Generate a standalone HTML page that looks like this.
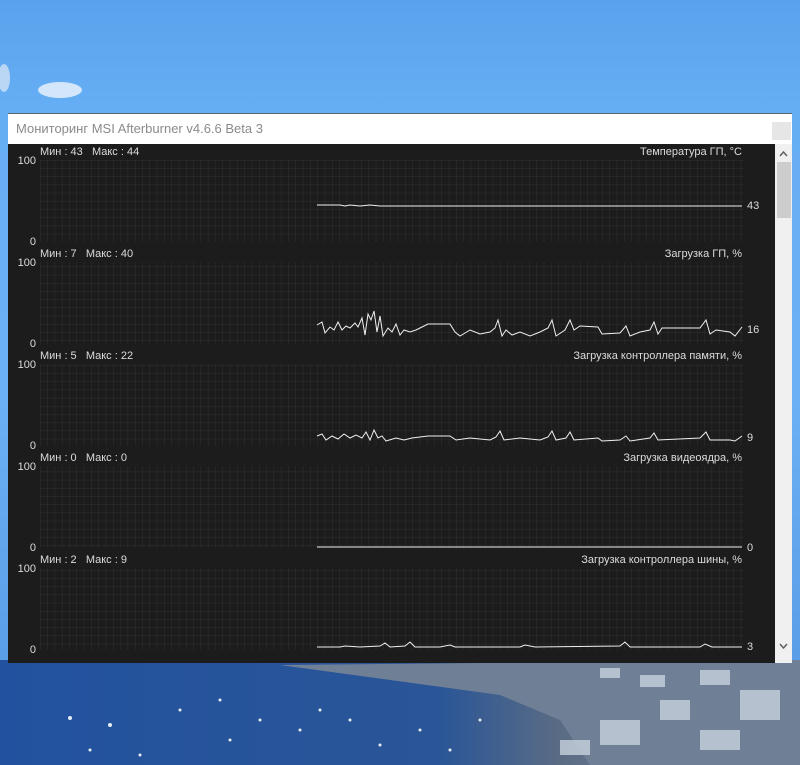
<!DOCTYPE html>
<html><head><meta charset="utf-8"><style>
html,body{margin:0;padding:0;width:800px;height:765px;overflow:hidden}
body{background:linear-gradient(#5aa2ec,#66aef4 110px,#6bb0f4 400px,#5a9ee8 660px);position:relative;font-family:"Liberation Sans",sans-serif}
</style></head><body>
<svg width="800" height="765" style="position:absolute;left:0;top:0" font-family="Liberation Sans, sans-serif">
<defs>
<pattern id="g" x="40" y="160" width="7.3" height="8.2" patternUnits="userSpaceOnUse">
<path d="M0 0H7.3M0 0V8.2" stroke="#303030" stroke-width="1" fill="none"/>
</pattern>
<linearGradient id="city" x1="0" x2="1" y1="0" y2="0">
<stop offset="0" stop-color="#22529f"/><stop offset="0.55" stop-color="#2a5597"/><stop offset="0.7" stop-color="#5a6c84"/><stop offset="1" stop-color="#8a96a8"/>
</linearGradient>
</defs>
<ellipse cx="60" cy="90" rx="22" ry="8" fill="#e8f0fa" opacity="0.85"/>
<ellipse cx="4" cy="78" rx="6" ry="14" fill="#e0eaf6" opacity="0.7"/>
<rect x="0" y="660" width="800" height="105" fill="url(#city)"/>
<path d="M280 665 L500 695 L560 720 L590 765 L800 765 L800 660 Z" fill="#6f7f95"/>
<g fill="#c8d2de" opacity="0.8">
<rect x="600" y="668" width="20" height="10"/><rect x="640" y="675" width="25" height="12"/><rect x="700" y="670" width="30" height="15"/><rect x="740" y="690" width="40" height="30"/><rect x="660" y="700" width="30" height="20"/><rect x="600" y="720" width="40" height="25"/><rect x="700" y="730" width="40" height="20"/><rect x="560" y="740" width="30" height="15"/>
</g>
<g fill="#e6ecf4">
<circle cx="180" cy="710" r="1.5"/><circle cx="230" cy="740" r="1.5"/><circle cx="260" cy="720" r="1.5"/><circle cx="300" cy="730" r="1.5"/><circle cx="350" cy="720" r="1.5"/><circle cx="380" cy="745" r="1.5"/><circle cx="220" cy="700" r="1.5"/><circle cx="320" cy="710" r="1.5"/><circle cx="90" cy="750" r="1.5"/><circle cx="140" cy="755" r="1.5"/><circle cx="70" cy="718" r="2"/><circle cx="110" cy="725" r="2"/><circle cx="420" cy="730" r="1.5"/><circle cx="450" cy="750" r="1.5"/><circle cx="480" cy="720" r="1.5"/>
</g>
<rect x="8" y="113" width="784" height="550" fill="#1c1c1c"/>
<rect x="8" y="113" width="784" height="31" fill="#ffffff"/>
<rect x="8" y="113" width="784" height="1" fill="#5a6470"/>
<rect x="772" y="122" width="19" height="18" fill="#e6e6e6"/>
<text x="16" y="133" font-size="13" fill="#8a8a8a">Мониторинг MSI Afterburner v4.6.6 Beta 3</text>
<rect x="775" y="144" width="17" height="519" fill="#f0f0f0"/>
<rect x="777" y="162" width="14" height="56" fill="#cdcdcd"/>
<path d="M780 156 L783.5 152 L787 156" stroke="#606060" stroke-width="1.5" fill="none"/>
<path d="M780 644 L783.5 648 L787 644" stroke="#606060" stroke-width="1.5" fill="none"/>
<rect x="40" y="160" width="703" height="82" fill="url(#g)"/>
<rect x="40" y="262" width="703" height="82" fill="url(#g)"/>
<rect x="40" y="364" width="703" height="82" fill="url(#g)"/>
<rect x="40" y="466" width="703" height="82" fill="url(#g)"/>
<rect x="40" y="568" width="703" height="82" fill="url(#g)"/>
<g font-size="11" fill="#dcdcdc">
<text x="40" y="155">Мин : 43&#160;&#160;&#160;Макс : 44</text>
<text x="742" y="155" text-anchor="end">Температура ГП, °С</text>
<text x="36" y="164" text-anchor="end">100</text><text x="36" y="245" text-anchor="end">0</text>
<text x="747" y="209">43</text>
<text x="40" y="257">Мин : 7&#160;&#160;&#160;Макс : 40</text>
<text x="742" y="257" text-anchor="end">Загрузка ГП, %</text>
<text x="36" y="266" text-anchor="end">100</text><text x="36" y="347" text-anchor="end">0</text>
<text x="747" y="333">16</text>
<text x="40" y="359">Мин : 5&#160;&#160;&#160;Макс : 22</text>
<text x="742" y="359" text-anchor="end">Загрузка контроллера памяти, %</text>
<text x="36" y="368" text-anchor="end">100</text><text x="36" y="449" text-anchor="end">0</text>
<text x="747" y="441">9</text>
<text x="40" y="461">Мин : 0&#160;&#160;&#160;Макс : 0</text>
<text x="742" y="461" text-anchor="end">Загрузка видеоядра, %</text>
<text x="36" y="470" text-anchor="end">100</text><text x="36" y="551" text-anchor="end">0</text>
<text x="747" y="551">0</text>
<text x="40" y="563">Мин : 2&#160;&#160;&#160;Макс : 9</text>
<text x="742" y="563" text-anchor="end">Загрузка контроллера шины, %</text>
<text x="36" y="572" text-anchor="end">100</text><text x="36" y="653" text-anchor="end">0</text>
<text x="747" y="650">3</text>
</g>
<g stroke="#f0f0f0" stroke-width="1" fill="none">
<path d="M317 205 L340 205 L345 206 L350 205 L360 206 L370 205 L380 206 L742 206"/>
<path d="M317 325 L322 322 L325 333 L330 327 L334 330 L338 322 L342 330 L346 326 L350 328 L355 323 L358 327 L362 318 L365 335 L368 314 L371 320 L374 311 L377 332 L380 316 L383 336 L388 328 L392 332 L396 324 L400 335 L404 330 L410 332 L416 330 L422 327 L428 324 L450 324 L455 332 L460 336 L470 330 L480 334 L490 332 L495 328 L498 320 L502 336 L506 330 L512 335 L520 332 L530 336 L540 332 L548 328 L552 320 L556 336 L565 330 L570 320 L574 330 L580 326 L598 327 L602 334 L620 333 L626 326 L630 336 L640 332 L650 330 L654 322 L658 334 L662 328 L700 328 L706 320 L710 334 L716 330 L730 332 L735 336 L742 327"/>
<path d="M317 436 L322 434 L326 440 L332 436 L338 439 L344 434 L350 438 L356 435 L362 438 L366 432 L370 440 L374 430 L378 438 L382 436 L386 441 L396 438 L404 440 L412 438 L428 436 L450 436 L456 440 L470 438 L490 440 L496 437 L500 431 L504 440 L520 438 L540 440 L548 437 L552 431 L556 440 L566 438 L570 432 L574 440 L598 438 L602 441 L620 440 L626 436 L630 441 L650 438 L654 433 L658 440 L700 438 L706 432 L710 440 L730 440 L735 441 L742 436"/>
<path d="M317 547 L742 547"/>
<path d="M317 647 L340 647 L345 646 L360 647 L380 646 L385 643 L390 647 L405 646 L410 642 L415 647 L440 647 L450 645 L455 647 L520 647 L525 645 L535 647 L620 646 L625 642 L630 647 L700 647 L705 644 L712 647 L742 647"/>
</g>
</svg>
</body></html>
